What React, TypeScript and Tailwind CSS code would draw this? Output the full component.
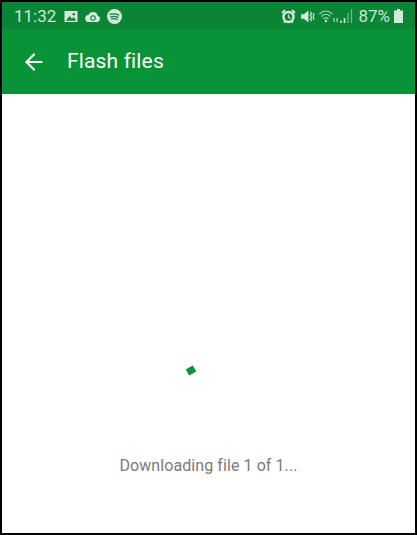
import { ArrowLeft } from "lucide-react"

function StatusBar() {
  return (
    <div className="flex h-[27px] items-center justify-between bg-[#0a8435] pl-[12px] pr-[12px] pt-[1px] text-[#cfe6d6]">
      <div className="flex items-center">
        <span className="text-[17px] leading-none">11:32</span>
        <svg className="ml-[8px]" width="14" height="13" viewBox="0 0 15 13">
          <rect x="0.5" y="0.5" width="14" height="12" rx="1" fill="#d5e9db" />
          <path d="M2 11 L6 6 L8.5 9 L10.5 7 L13 11 Z" fill="#0a8435" />
          <circle cx="10.5" cy="4" r="1.3" fill="#0a8435" />
        </svg>
        <svg className="ml-[7px]" width="16" height="11" viewBox="0 0 16 11">
          <path d="M4 11 a3.5 3.5 0 0 1 -0.6 -7 a5 5 0 0 1 9.4 0.8 a3.2 3.2 0 0 1 -0.4 6.2 Z" fill="#d5e9db" />
          <circle cx="8" cy="7" r="2.2" fill="none" stroke="#0a8435" strokeWidth="1.1" />
        </svg>
        <svg className="ml-[6px]" width="15" height="15" viewBox="0 0 15 15">
          <circle cx="7.5" cy="7.5" r="7.5" fill="#d5e9db" />
          <path d="M3.2 5.4 Q7.5 4 11.8 6 M3.8 7.8 Q7.5 6.6 11 8.3 M4.4 10 Q7.5 9.1 10.3 10.5" fill="none" stroke="#0a8435" strokeWidth="1.3" strokeLinecap="round" />
        </svg>
      </div>
      <div className="flex items-center">
        <svg width="15" height="15" viewBox="0 0 15 15">
          <circle cx="7.5" cy="8" r="5" fill="none" stroke="#d5e9db" strokeWidth="2.4" />
          <path d="M7.5 5.5 V8.3 L9.5 9.5" fill="none" stroke="#d5e9db" strokeWidth="1.2" />
          <path d="M1 4 L4 1 M14 4 L11 1 M3 13.5 L4.5 12 M12 13.5 L10.5 12" stroke="#d5e9db" strokeWidth="1.8" />
        </svg>
        <svg className="ml-[5px]" width="14" height="15" viewBox="0 0 15 14">
          <path d="M0 4.5 H3 L8 0.5 V13.5 L3 9.5 H0 Z" fill="#d5e9db" />
          <path d="M10 2 L11.5 4 L10 6 L11.5 8 L10 10 L11.5 12 M13 3.5 L14 5 L13 7 L14 9 L13 10.5" fill="none" stroke="#d5e9db" strokeWidth="1.2" />
        </svg>
        <svg className="ml-[4px]" width="20" height="14" viewBox="0 0 20 14">
          <path d="M0.5 5 Q7 -1 13.5 5 M2.5 7.5 Q7 3 11.5 7.5 M4.5 10 Q7 7.8 9.5 10" fill="none" stroke="#a9d3b7" strokeWidth="1.1" />
          <circle cx="7" cy="12" r="1.2" fill="#cfe6d6" />
          <path d="M15 9 V13 M18 13 V9" stroke="#d5e9db" strokeWidth="1" />
        </svg>
        <svg className="ml-[1px]" width="13" height="16" viewBox="0 0 13 16">
          <path d="M1 12.5 V15 M4.5 10 V15" stroke="#d5e9db" strokeWidth="1.6" />
          <path d="M8 5 V15 M11.5 1 V15" stroke="#79b98f" strokeWidth="1.2" />
        </svg>
        <span className="ml-[5px] text-[17px] leading-none">87%</span>
        <svg className="ml-[4px]" width="9" height="14" viewBox="0 0 9 14">
          <path d="M3 0 H6 V1.5 H9 V14 H0 V1.5 H3 Z" fill="#d5e9db" />
        </svg>
      </div>
    </div>
  )
}

export default function App() {
  return (
    <div className="h-[535px] w-[417px] border-2 border-black bg-white font-['Roboto',sans-serif]">
      <StatusBar />
      <div className="flex h-[65px] items-center bg-[#089436] pl-[19px] pt-[1px] text-white">
        <ArrowLeft size={26} strokeWidth={2} />
        <h1 className="ml-[20px] text-[21px] font-normal tracking-[0.15px]">Flash files</h1>
      </div>
      <div className="flex h-[439px] flex-col items-center">
        <div className="mt-[273px] h-[7px] w-[8px] -translate-x-[18px] rotate-[-30deg] bg-[#08913a]" />
        <p className="mt-[82px] text-[16px] leading-[20px] tracking-[0.08px] text-[#7a7a7a]">Downloading file 1 of 1...</p>
      </div>
    </div>
  )
}
